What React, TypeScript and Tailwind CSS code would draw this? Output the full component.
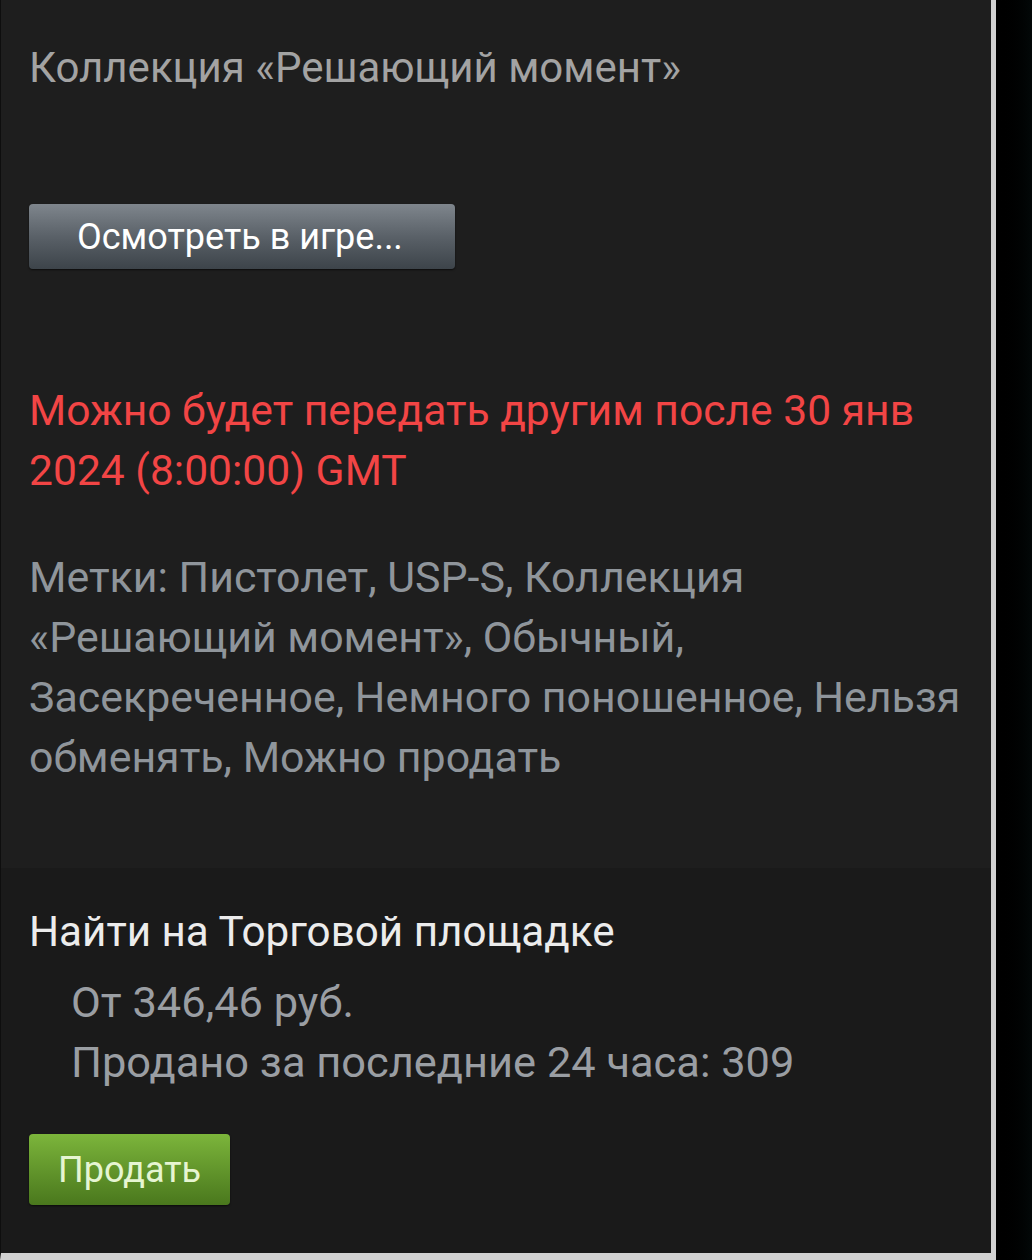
import React from "react";

export default function App() {
  return (
    <div
      className="w-[1032px] h-[1260px] flex bg-[#000] overflow-hidden"
      style={{ fontFamily: "Roboto, 'Noto Sans', sans-serif" }}
    >
      <div className="w-[996px] h-[1260px] flex flex-col border-l border-l-[#0e0e0e] border-r-[5px] border-r-[#d2d2d2] border-b-[7px] border-b-[#d2d2d2] bg-[#1e1e1e]">
        <div className="pl-[28px] pr-[20px] pt-[38px] h-[868px] shrink-0">
          <div className="text-[42px] leading-[60px] text-[#a3a3a3]">
            Коллекция «Решающий момент»
          </div>
          <div className="mt-[106px] w-[426px] h-[65px] rounded-[4px] bg-gradient-to-b from-[#7f868d] via-[#5a6168] to-[#3d444a] flex items-center pl-[48px] shadow-[0_1px_2px_rgba(0,0,0,0.6)]">
            <span className="text-[36px] leading-none text-white">Осмотреть в игре...</span>
          </div>
          <div className="mt-[111px] text-[42.6px] leading-[60px] text-[#f24545]">
            Можно будет передать другим после 30 янв 2024 (8:00:00) GMT
          </div>
          <div className="mt-[47px] text-[42.9px] leading-[60px] text-[#8f959b]">
            Метки: Пистолет, USP-S, Коллекция «Решающий момент», Обычный, Засекреченное, Немного поношенное, Нельзя обменять, Можно продать
          </div>
        </div>
        <div className="flex-1 bg-[#1a1a1a] pl-[28px] pt-[34px]">
          <div className="text-[42.2px] leading-[60px] text-[#ececec]">
            Найти на Торговой площадке
          </div>
          <div className="mt-[11px] pl-[42px] text-[43.4px] leading-[60px] text-[#9a9ea3]">
            <div>От 346,46 руб.</div>
            <div>Продано за последние 24 часа: 309</div>
          </div>
          <div className="mt-[41px] w-[201px] h-[71px] rounded-[4px] bg-gradient-to-b from-[#7cb53b] to-[#4a781d] flex items-center pl-[29px] shadow-[0_1px_2px_rgba(0,0,0,0.6)]">
            <span className="text-[36px] leading-none text-[#e6f5d2]">Продать</span>
          </div>
        </div>
      </div>
      <div className="flex-1 h-[1260px] bg-gradient-to-r from-[#000] to-[#030808]" />
    </div>
  );
}
